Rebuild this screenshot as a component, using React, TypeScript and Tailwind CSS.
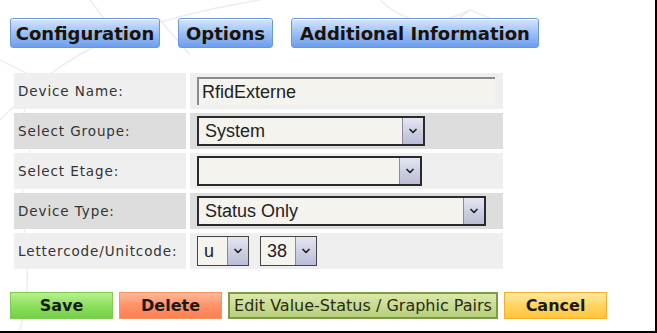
import { ChevronDown } from "lucide-react";

const labelFont = "font-['DejaVu_Sans','Verdana',sans-serif]";

function Tab({ label, width }: { label: string; width: number }) {
  return (
    <div
      className={`h-[30px] flex items-center justify-center rounded-[3px] border border-[#6d95dc] bg-gradient-to-b from-[#d6e6fd] via-[#9cc0f6] to-[#6f9eee] shadow-[inset_0_1px_0_#fff] text-[18px] font-bold text-[#1a1208] ${labelFont}`}
      style={{ width }}
    >
      {label}
    </div>
  );
}

function Arrow() {
  return (
    <div className="w-[21px] h-full flex items-center justify-center border-l border-[#8a8a9a] bg-gradient-to-b from-[#e4e6f2] to-[#b9bdd6]">
      <ChevronDown className="w-[12px] h-[12px] text-[#222]" strokeWidth={3.5} />
    </div>
  );
}

function Select({ value, width, thin }: { value: string; width: number; thin?: boolean }) {
  return (
    <div
      className={`h-[30px] flex items-stretch bg-[#f4f3ee] ${thin ? "border-[1.5px] border-[#444]" : "border-2 border-[#2a2a2a]"}`}
      style={{ width }}
    >
      <div className="flex-1 flex items-center pl-[6px] text-[18px] text-[#222] font-['Liberation_Sans',Arial,sans-serif]">
        {value}
      </div>
      <Arrow />
    </div>
  );
}

const rows: { label: string; dark: boolean; field: React.ReactNode }[] = [
  {
    label: "Device Name:",
    dark: false,
    field: (
      <div className="w-[298px] h-[28px] flex items-center pl-[3px] bg-[#f4f3ee] border-t-2 border-l-2 border-[#8c8c8c] text-[18px] text-[#222] font-['Liberation_Sans',Arial,sans-serif]">
        RfidExterne
      </div>
    ),
  },
  { label: "Select Groupe:", dark: true, field: <Select value="System" width={228} /> },
  { label: "Select Etage:", dark: false, field: <Select value="" width={225} /> },
  { label: "Device Type:", dark: true, field: <Select value="Status Only" width={289} /> },
  {
    label: "Lettercode/Unitcode:",
    dark: false,
    field: (
      <div className="flex items-center gap-[11px]">
        <Select value="u" width={52} thin />
        <Select value="38" width={57} thin />
      </div>
    ),
  },
];

export default function App() {
  return (
    <div className="relative w-[657px] h-[333px] overflow-hidden bg-white border-r-2 border-b-2 border-black">
      {/* faint watermark drawing */}
      <svg className="absolute inset-0 w-full h-full" viewBox="0 0 655 331" fill="none" stroke="#ececf6" strokeWidth="1.5">
        <path d="M0 120 C 30 90, 60 60, 110 40 S 200 10, 260 0" />
        <path d="M20 330 C 40 260, 10 200, 30 150" />
        <path d="M90 0 L 120 40 L 160 20 L 190 55" />
        <path d="M380 0 C 400 20, 430 30, 470 10" />
        <path d="M430 40 L 470 10 L 520 30" />
        <path d="M0 60 L 40 80 L 20 120" />
      </svg>

      <div className="relative flex flex-col pl-[10px] pt-[18px]">
        <div className="flex gap-[18px]">
          <Tab label="Configuration" width={150} />
          <Tab label="Options" width={95} />
          <Tab label="Additional Information" width={248} />
        </div>

        <div className="ml-[4px] mt-[25px] grid grid-cols-[172px_313px] gap-[4px]">
          {rows.map((r) => (
            <div key={r.label} className="contents">
              <div
                className={`h-[36px] flex items-center pl-[4px] text-[13.5px] tracking-[0.9px] text-[#333] ${labelFont} ${
                  r.dark ? "bg-[#dddddd]" : "bg-[#efefef]"
                }`}
              >
                {r.label}
              </div>
              <div className={`h-[36px] flex items-center pl-[7px] ${r.dark ? "bg-[#dddddd]" : "bg-[#efefef]"}`}>
                {r.field}
              </div>
            </div>
          ))}
        </div>

        <div className={`mt-[23px] flex gap-[6px] text-[16px] ${labelFont}`}>
          <button className="w-[103px] h-[27px] border border-[#7fcc55] bg-gradient-to-b from-[#b6f08c] via-[#8ee05e] to-[#74d046] font-bold text-[#1a1a1a]">
            Save
          </button>
          <button className="w-[103px] h-[27px] border border-[#f5955f] bg-gradient-to-b from-[#ffb898] via-[#ff9268] to-[#ff7e52] font-bold text-[#1a1a1a]">
            Delete
          </button>
          <button className="w-[270px] h-[27px] border-2 border-[#7d9a45] bg-gradient-to-b from-[#dbe8a8] to-[#b8d07a] text-[#2a2a1a]">
            Edit Value-Status / Graphic Pairs
          </button>
          <button className="w-[103px] h-[27px] border border-[#f4b030] bg-gradient-to-b from-[#ffe9a0] via-[#ffd460] to-[#ffc638] font-bold text-[#1a1a1a]">
            Cancel
          </button>
        </div>
      </div>
    </div>
  );
}
